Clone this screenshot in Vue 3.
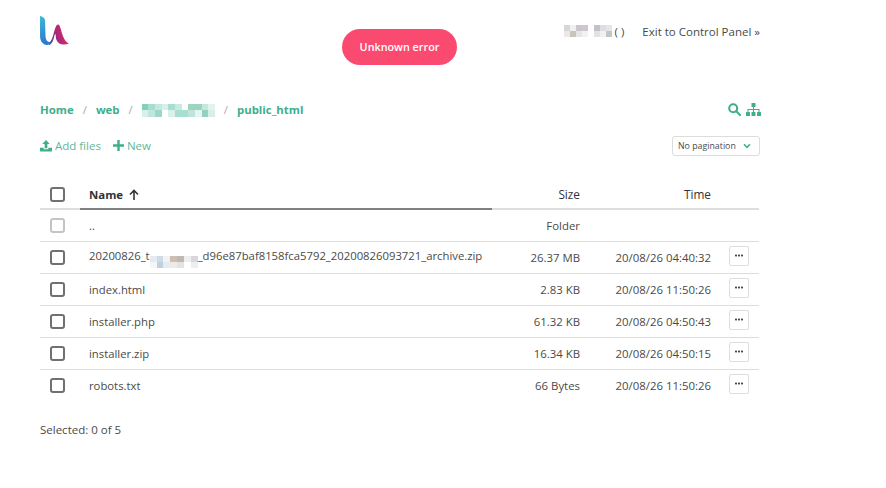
<template>
  <div class="page">
    <header class="top">
      <svg class="logo" viewBox="0 0 30 30" width="30" height="30">
        <defs>
          <linearGradient id="lg1" x1="0" y1="0" x2="0.300" y2="1">
            <stop offset="0" stop-color="#3fbad6" />
            <stop offset="1" stop-color="#2a78cf" />
          </linearGradient>
          <linearGradient id="lg2" x1="0" y1="1" x2="1" y2="0.700">
            <stop offset="0" stop-color="#3f3f9e" />
            <stop offset="0.5" stop-color="#a62a78" />
            <stop offset="1" stop-color="#ea2468" />
          </linearGradient>
        </defs>
        <path d="M9 27 C14 24 14 9 18 8.500 C21.500 8 21 24 29 27.500 C24 29.500 18.500 29 16.500 24 C15.500 21 16 18 15.200 18 C14 18 14 28 9 29Z" fill="url(#lg2)" />
        <path d="M0 0 C2.500 0.500 4.500 1.500 5 4 L5.500 20 C5.700 25 8 26.800 12 26 C10 29 7 29.500 4.500 28.500 C1.500 27 0 24 0 20Z" fill="url(#lg1)" />
      </svg>
      <div class="user">
        <span class="blur user-blur">
          <span v-for="(r, i) in userBlur" :key="i" class="blur-row">
            <i v-for="(c, j) in r" :key="j" :style="{ background: c }"></i>
          </span>
        </span>
        <span class="parens">( )</span>
        <a class="exit">Exit to Control Panel »</a>
      </div>
      <div class="toast">Unknown error</div>
    </header>

    <div class="crumbs-row">
      <nav class="crumbs">
        <a>Home</a><span class="sep">/</span>
        <a>web</a><span class="sep">/</span>
        <span class="blur crumb-blur">
          <span v-for="(r, i) in crumbBlur" :key="i" class="blur-row">
            <i v-for="(c, j) in r" :key="j" :style="{ background: c }"></i>
          </span>
        </span><span class="sep">/</span>
        <a>public_html</a>
      </nav>
      <div class="tools">
        <svg width="13" height="13" viewBox="0 0 13 13" fill="none" stroke="#3fae8c" stroke-width="2.100">
          <circle cx="5.200" cy="5.200" r="4" />
          <path d="M8.300 8.300l3.700 3.700" stroke-linecap="round" />
        </svg>
        <svg width="15" height="13" viewBox="0 0 15 13" fill="#3fae8c">
          <rect x="5.500" y="0" width="4" height="4" rx="0.600" />
          <rect x="0" y="9" width="4" height="4" rx="0.600" />
          <rect x="5.500" y="9" width="4" height="4" rx="0.600" />
          <rect x="11" y="9" width="4" height="4" rx="0.600" />
          <path d="M7 3.500h1v2.500h5.500v3h-1v-2H8v2H7v-2H2.500v2h-1v-3H7z" />
        </svg>
      </div>
    </div>

    <div class="actions-row">
      <div class="actions">
        <a class="action">
          <svg width="12" height="13" viewBox="0 0 13 13" fill="#3fae8c">
            <path d="M6.500 0.500L10.500 5H8v4.500H5V5H2.500z" />
            <path d="M0 9h4v1.500h5V9h4v3.500a.5.5 0 0 1-.5.5H.5a.5.5 0 0 1-.5-.5z" />
          </svg>
          Add files
        </a>
        <a class="action">
          <svg width="11" height="11" viewBox="0 0 11 11" fill="#3fae8c">
            <path d="M4.300 0h2.400v4.300H11v2.400H6.700V11H4.300V6.700H0V4.300h4.300z" />
          </svg>
          New
        </a>
      </div>
      <div class="select">
        No pagination
        <svg width="8" height="6" viewBox="0 0 9 7" fill="none" stroke="#3fae8c" stroke-width="1.800">
          <path d="M1 1.500l3.500 3.500L8 1.500" />
        </svg>
      </div>
    </div>

    <div class="table">
      <div class="row head">
        <div class="c-check"><span class="box"></span></div>
        <div class="c-name sorted">Name
          <svg width="10" height="11" viewBox="0 0 10 11" fill="none" stroke="#333" stroke-width="1.600">
            <path d="M5 11V1.500M1 5.500l4-4 4 4" />
          </svg>
        </div>
        <div class="c-size">Size</div>
        <div class="c-time">Time</div>
        <div class="c-menu"></div>
      </div>
      <div v-for="f in files" :key="f.name" class="row">
        <div class="c-check"><span :class="['box', { muted: f.up }]"></span></div>
        <div class="c-name">
          <template v-if="f.blur">
            20200826_t<span class="blur name-blur"><span v-for="(r, i) in nameBlur" :key="i" class="blur-row"><i v-for="(c, j) in r" :key="j" :style="{ background: c }"></i></span></span>_d96e87baf8158fca5792_20200826093721_archive.zip
          </template>
          <template v-else>{{ f.name }}</template>
        </div>
        <div class="c-size">{{ f.size }}</div>
        <div class="c-time">{{ f.time }}</div>
        <div class="c-menu">
          <button v-if="!f.up" class="dots">
            <svg width="8" height="3" viewBox="0 0 8 3" fill="#444">
              <rect x="0" y="0.500" width="2" height="2" rx="0.700" />
              <rect x="3" y="0.500" width="2" height="2" rx="0.700" />
              <rect x="6" y="0.500" width="2" height="2" rx="0.700" />
            </svg>
          </button>
        </div>
      </div>
    </div>

    <div class="selected">Selected: 0 of 5</div>
  </div>
</template>

<script setup>
const files = [
  { name: '..', size: 'Folder', time: '', up: true },
  { name: 'archive', blur: true, size: '26.37 MB', time: '20/08/26 04:40:32' },
  { name: 'index.html', size: '2.83 KB', time: '20/08/26 11:50:26' },
  { name: 'installer.php', size: '61.32 KB', time: '20/08/26 04:50:43' },
  { name: 'installer.zip', size: '16.34 KB', time: '20/08/26 04:50:15' },
  { name: 'robots.txt', size: '66 Bytes', time: '20/08/26 11:50:26' }
]

// censored bits of the screenshot, two rows of colored cells
const userBlur = [
  ['#d8d6d8', '#f2eff2', '#cdc3cf', '#cfc6d1', '#fff', '#c2c2c8', '#dedee2', '#e6e6e8'],
  ['#ebe9e6', '#c9c4bd', '#e7e4ea', '#f3f1f4', '#fff', '#e2e2e4', '#f0f0f0', '#c4c4c4']
]
const crumbBlur = [
  ['#86cfc0', '#a9ddd0', '#c4e8df', '#d8f0ea', '#a8ddd0', '#c9eae2', '#fff', '#9dd5bf', '#9bd4bf', '#c6e7de', '#e2f4ef'],
  ['#d6f0ea', '#bfe6dc', '#9ed6c8', '#fff', '#d9f1eb', '#a9dfd2', '#a8ded0', '#bfe5da', '#e6f5f1', '#93d2c0', '#d8efe9']
]
const nameBlur = [
  ['#e6eaee', '#cfdbe4', '#f2f2f2', '#cbbfb6', '#bfb9b6', '#eeeeee', '#d8d8dc'],
  ['#f4f6f8', '#c2d0dc', '#e4ecf2', '#efeae6', '#e6e2e0', '#fff', '#eeeef0']
]
</script>

<style>
html, body {
  margin: 0;
  background: #fff;
}
</style>

<style scoped>
.page {
  width: 720px;
  margin-left: 40px;
  font-family: "Open Sans", "Noto Sans", sans-serif;
  font-size: 11.400px;
  color: #4a4a4a;
}

.top {
  position: relative;
  height: 96px;
  display: flex;
  justify-content: space-between;
  align-items: flex-start;
}

.logo {
  margin-top: 16px;
}

.user {
  display: flex;
  align-items: center;
  margin-top: 22px;
  height: 18px;
  font-size: 11.500px;
}

.blur {
  display: inline-flex;
  flex-direction: column;
  vertical-align: middle;
}

.blur-row {
  display: flex;
  flex: 1;
}

.blur i {
  display: block;
  flex: 1;
}

.user-blur {
  width: 48px;
  height: 12px;
  margin-right: 3px;
}

.parens {
  margin-right: 18px;
}

.toast {
  position: absolute;
  left: 302px;
  top: 29px;
  width: 115px;
  height: 36px;
  border-radius: 18px;
  background: #fb4a70;
  color: #fff;
  font-weight: 600;
  font-size: 10.800px;
  line-height: 36px;
  text-align: center;
}

.crumbs-row {
  display: flex;
  justify-content: space-between;
  align-items: center;
  height: 28px;
}

.crumbs {
  display: flex;
  align-items: center;
  margin-top: -2px;
  font-weight: 700;
  color: #3fae8c;
}

.sep {
  color: #aaa;
  font-weight: 400;
  margin: 0 9px;
}

.crumb-blur {
  width: 73px;
  height: 13px;
  margin-top: 2px;
}

.tools {
  display: flex;
  gap: 5px;
  align-items: center;
  margin: -2px -1px 0 0;
}

.actions-row {
  display: flex;
  justify-content: space-between;
  align-items: center;
  height: 24px;
  margin-top: 10px;
}

.actions {
  display: flex;
  gap: 12px;
  margin-top: -2px;
}

.action {
  display: flex;
  align-items: center;
  gap: 3px;
  color: #5fb89d;
  font-size: 11.500px;
}

.select {
  display: flex;
  align-items: center;
  justify-content: space-between;
  box-sizing: border-box;
  width: 88px;
  height: 20px;
  padding: 0 8px 0 5px;
  border: 1px solid #ddd;
  border-radius: 3px;
  font-size: 8.800px;
}

.table {
  margin-top: 22px;
  width: 719px;
}

.row {
  display: flex;
  align-items: center;
  height: 32px;
  box-sizing: border-box;
  border-bottom: 1px solid #ddd;
}

.row:last-child {
  border-bottom-color: transparent;
}

.head {
  height: 30px;
  border-bottom: 2px solid #ddd;
  font-weight: 500;
  color: #333;
  align-items: stretch;
}

.head > div {
  display: flex;
  align-items: center;
}

.head .c-size,
.head .c-time {
  justify-content: flex-end;
  font-size: 11.800px;
}

.head .sorted {
  font-weight: 700;
  gap: 6px;
  margin-bottom: -2px;
  border-bottom: 2px solid #808080;
}

.c-check {
  width: 40px;
  flex: none;
  display: flex;
  padding-left: 10px;
  box-sizing: border-box;
}

.c-name {
  width: 412px;
  flex: none;
  box-sizing: border-box;
  padding-left: 9px;
  white-space: nowrap;
  font-size: 11.300px;
}

.head .c-name {
  font-size: 11.400px;
}

.c-size {
  width: 88px;
  flex: none;
  text-align: right;
}

.c-time {
  width: 131px;
  flex: none;
  text-align: right;
}

.c-menu {
  flex: 1;
  display: flex;
  justify-content: flex-end;
  padding-right: 10px;
}

.box {
  display: block;
  box-sizing: border-box;
  width: 15px;
  height: 15px;
  border: 2px solid #707070;
  border-radius: 3px;
}

.box.muted {
  border-color: #c4c4c4;
}

.name-blur {
  width: 48px;
  height: 12px;
  vertical-align: -2px;
}

.dots {
  display: flex;
  align-items: center;
  justify-content: center;
  box-sizing: border-box;
  width: 20px;
  height: 20px;
  margin-top: -4px;
  padding: 0;
  border: 1px solid #ddd;
  border-radius: 2px;
  background: #fff;
}

.selected {
  margin-top: 20px;
  font-size: 11.500px;
}
</style>
